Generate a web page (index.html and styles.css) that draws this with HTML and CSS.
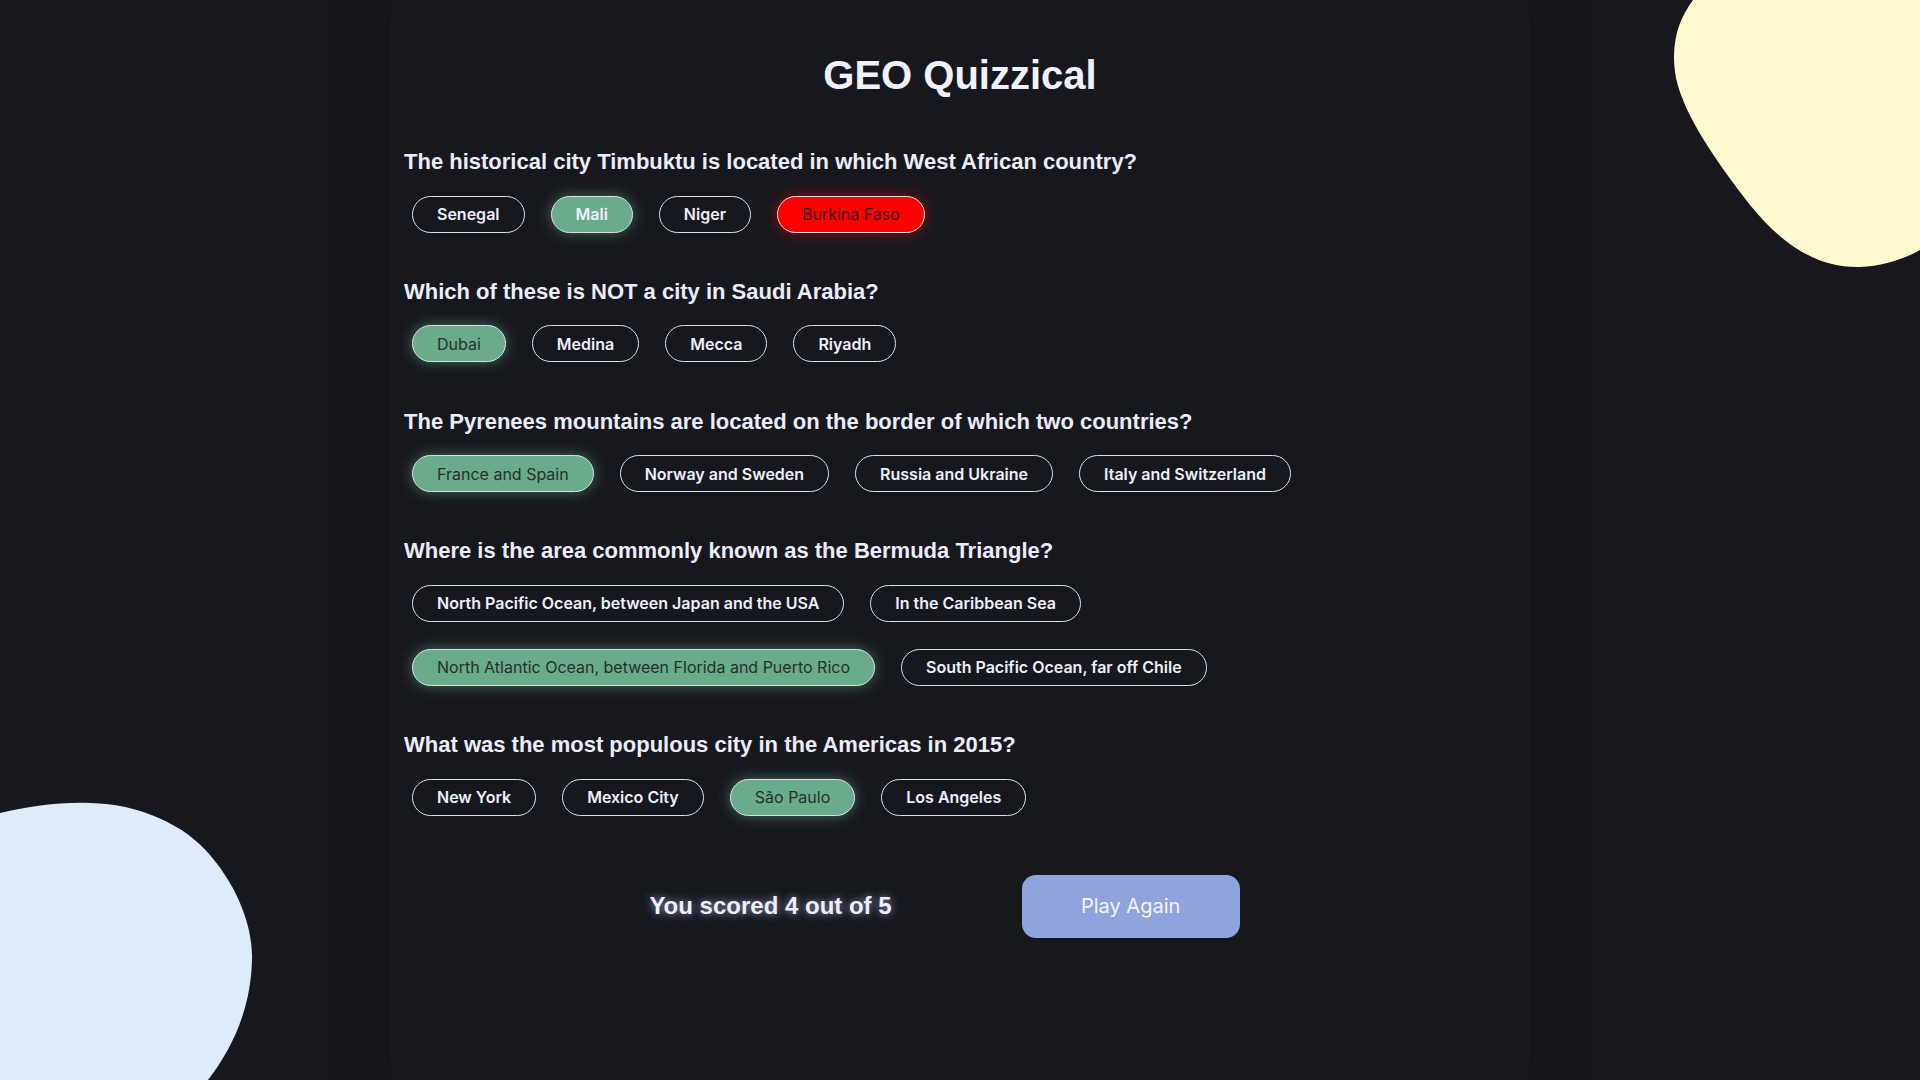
FILE: index.html
```html
<!DOCTYPE html>
<html lang="en">
<head>
<meta charset="utf-8">
<title>GEO Quizzical</title>
<link rel="stylesheet" href="styles.css">
</head>
<body>
<svg class="blob blob-top" width="300" height="280" viewBox="0 0 300 280" aria-hidden="true">
  <path d="M73,0 C58,20 50,45 56,78 C64,115 95,160 130,205 C165,248 200,268 240,267 C262,266 282,260 300,250 L300,0 Z" fill="#fff9d0"/>
</svg>
<svg class="blob blob-bottom" width="270" height="300" viewBox="0 0 270 300" aria-hidden="true">
  <path d="M0,33 C30,26 60,22 90,23 C140,24 185,45 210,75 C240,110 253,150 252,180 C251,225 235,265 208,300 L0,300 Z" fill="#deebf8"/>
</svg>
<main class="quiz">
  <h1 class="title">GEO Quizzical</h1>

  <section class="question">
    <h2 class="q-text">The historical city Timbuktu is located in which West African country?</h2>
    <div class="answers">
      <button class="answer">Senegal</button>
      <button class="answer correct">Mali</button>
      <button class="answer">Niger</button>
      <button class="answer wrong">Burkina Faso</button>
    </div>
  </section>

  <section class="question">
    <h2 class="q-text">Which of these is NOT a city in Saudi Arabia?</h2>
    <div class="answers">
      <button class="answer picked">Dubai</button>
      <button class="answer">Medina</button>
      <button class="answer">Mecca</button>
      <button class="answer">Riyadh</button>
    </div>
  </section>

  <section class="question">
    <h2 class="q-text">The Pyrenees mountains are located on the border of which two countries?</h2>
    <div class="answers">
      <button class="answer picked">France and Spain</button>
      <button class="answer">Norway and Sweden</button>
      <button class="answer">Russia and Ukraine</button>
      <button class="answer">Italy and Switzerland</button>
    </div>
  </section>

  <section class="question">
    <h2 class="q-text">Where is the area commonly known as the Bermuda Triangle?</h2>
    <div class="answers">
      <button class="answer">North Pacific Ocean, between Japan and the USA</button>
      <button class="answer">In the Caribbean Sea</button>
      <button class="answer picked">North Atlantic Ocean, between Florida and Puerto Rico</button>
      <button class="answer">South Pacific Ocean, far off Chile</button>
    </div>
  </section>

  <section class="question">
    <h2 class="q-text">What was the most populous city in the Americas in 2015?</h2>
    <div class="answers">
      <button class="answer">New York</button>
      <button class="answer">Mexico City</button>
      <button class="answer picked">São Paulo</button>
      <button class="answer">Los Angeles</button>
    </div>
  </section>

  <div class="footer">
    <p class="score">You scored 4 out of 5</p>
    <button class="play-again">Play Again</button>
  </div>
</main>
</body>
</html>
```

FILE: styles.css
```css
html, body {
  margin: 0;
  padding: 0;
}

body {
  background: #17181d;
  width: 1920px;
  height: 1080px;
  overflow: hidden;
  position: relative;
  font-family: "Liberation Sans", Arial, sans-serif;
  color: #eeeffa;
}

.blob {
  position: absolute;
  display: block;
}

.blob-top {
  top: 0;
  right: 0;
}

.blob-bottom {
  left: 0;
  bottom: 0;
}

.quiz {
  width: 1140px;
  margin: 0 auto;
  padding-top: 52px;
  box-sizing: border-box;
  min-height: 1080px;
  background: #17181e;
  box-shadow: 0 0 60px rgba(0, 0, 0, 0.25);
}

.title {
  margin: 0 0 52px;
  font-size: 40px;
  line-height: 46px;
  font-weight: 700;
  text-align: center;
  color: #f1f1fc;
}

.question {
  padding-left: 14px;
  margin-bottom: 47.3px;
}

.q-text {
  margin: 0 0 21.5px;
  font-size: 22px;
  line-height: 24px;
  font-weight: 700;
  color: #ecedf9;
}

.answers {
  display: flex;
  flex-wrap: wrap;
  gap: 27px 26px;
  padding-left: 8px;
}

.answer {
  height: 37px;
  padding: 0 24px;
  border: 1px solid #dcdff0;
  border-radius: 19px;
  background: transparent;
  font-family: Inter, "Noto Sans", sans-serif;
  font-size: 16px;
  font-weight: 600;
  color: #eeeffa;
  white-space: nowrap;
}

.answer.correct {
  background: #6aab8c;
  box-shadow: 0 0 14px rgba(106, 171, 140, 0.55);
  color: #eef0fa;
}

.answer.picked {
  background: #6aab8c;
  box-shadow: 0 0 14px rgba(106, 171, 140, 0.55);
  color: #26302b;
  font-weight: 400;
}

.answer.wrong {
  background: #ff0000;
  box-shadow: 0 0 14px rgba(255, 0, 0, 0.55);
  color: #3a1016;
  font-weight: 400;
}

.footer {
  display: flex;
  align-items: center;
  justify-content: center;
  gap: 130px;
  padding-right: 31px;
  margin-top: 59px;
}

.score {
  margin: 0;
  font-size: 24px;
  font-weight: 700;
  color: #eeeffb;
  text-shadow: 0 0 8px rgba(190, 198, 255, 0.75);
}

.play-again {
  width: 218px;
  height: 63px;
  border: none;
  border-radius: 14px;
  background: #8fa3dd;
  font-family: Inter, "Noto Sans", sans-serif;
  font-size: 20px;
  font-weight: 400;
  color: #f3f4fc;
}
```
